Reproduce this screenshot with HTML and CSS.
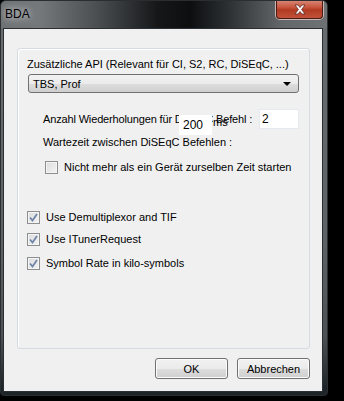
FILE: index.html
```html
<!DOCTYPE html>
<html lang="de">
<head>
  <meta charset="UTF-8" />
  <title>BDA</title>
  <link rel="stylesheet" href="styles.css">
</head>
<body>
  <div class="fenster">
    <div class="titel">
      <span class="titel-text">BDA</span>
      <div class="schliessen">
        <svg width="16" height="11" viewBox="0 0 16 11">
          <path d="M3 1 L6 1 L8 3.5 L10 1 L13 1 L9.6 5.5 L13 10 L10 10 L8 7.5 L6 10 L3 10 L6.4 5.5 Z" fill="#fff" stroke="#5a2a24" stroke-width="0.8"/>
        </svg>
      </div>
    </div>
    <div class="inhalt">
      <div class="gruppe">
        <div class="label">Zusätzliche API (Relevant für CI, S2, RC, DiSEqC, ...)</div>
        <div class="combo">
          <span>TBS, Prof</span>
          <svg width="8" height="4" viewBox="0 0 8 4"><path d="M0 0 L8 0 L4 4 Z" fill="#000"/></svg>
        </div>

        <div class="diseqc">
          <div class="zeile">
            <span class="zeile-text">Anzahl Wiederholungen für DiSEqC Befehl :</span>
            <div class="eingabe klein">2</div>
          </div>
          <div class="zeile2">Wartezeit zwischen DiSEqC Befehlen :</div>
          <label class="check">
            <span class="box"></span>
            Nicht mehr als ein Gerät zurselben Zeit starten
          </label>
          <div class="wartezeit">
            <div class="eingabe ms">200</div>
            <span>ms</span>
          </div>
        </div>

        <div class="optionen">
          <label class="check">
            <span class="box an"><svg width="9" height="9" viewBox="0 0 9 9"><path d="M1 4.5 L3.5 7.5 L8 1" fill="none" stroke="#6f86a8" stroke-width="1.8"/></svg></span>
            Use Demultiplexor and TIF
          </label>
          <label class="check">
            <span class="box an"><svg width="9" height="9" viewBox="0 0 9 9"><path d="M1 4.5 L3.5 7.5 L8 1" fill="none" stroke="#6f86a8" stroke-width="1.8"/></svg></span>
            Use ITunerRequest
          </label>
          <label class="check">
            <span class="box an"><svg width="9" height="9" viewBox="0 0 9 9"><path d="M1 4.5 L3.5 7.5 L8 1" fill="none" stroke="#6f86a8" stroke-width="1.8"/></svg></span>
            Symbol Rate in kilo-symbols
          </label>
        </div>
      </div>

      <div class="knoepfe">
        <button class="btn">OK</button>
        <button class="btn">Abbrechen</button>
      </div>
    </div>
  </div>
</body>
</html>
```

FILE: styles.css
```css
* { margin: 0; padding: 0; box-sizing: border-box; }
body {
  background-color: #000;
  font-family: "Liberation Sans", Arial, sans-serif;
  font-size: 11px;
  color: #000;
}

.fenster {
  width: 328px;
  height: 396px;
  border-radius: 6px 6px 4px 4px;
  background: linear-gradient(to bottom, #6a6d70 0, #5f6265 60%, #4d5155 85%, #1e2529 98%);
  border: 1px solid #2b2e31;
  display: flex;
  flex-direction: column;
  overflow: hidden;
}

.titel {
  height: 27px;
  display: flex;
  justify-content: space-between;
  align-items: flex-start;
  padding-left: 3px;
  padding-right: 4px;
  background: linear-gradient(to right, #6e7174 0, #75787b 12%, #4a4d50 30%, #151719 48%, #0c0e10 58%, #2e3134 70%, #64676a 86%, #6f7275 100%);
}

.titel-text {
  font-family: "Liberation Sans", Arial, sans-serif;
  font-size: 12px;
  color: #000;
  line-height: 26px;
  padding: 0 4px 0 1px;
  text-shadow: 0 0 6px #c8cacc, 0 0 10px #c8cacc;
}

.schliessen {
  width: 47px;
  height: 19px;
  margin-top: -1px;
  border: 1px solid #4a1a14;
  border-top: none;
  border-radius: 0 0 4px 4px;
  background: linear-gradient(to bottom, #d88a7c 0, #c8563f 40%, #b13b22 55%, #c2523b 100%);
  box-shadow: 0 0 0 1px #c9b8b6;
  display: flex;
  justify-content: center;
  align-items: center;
}

.inhalt {
  margin: 0 4px 3px 2px;
  flex: 1;
  background-color: #f0f0f0;
  border: 1px solid #2a2f33;
  padding: 19px 12px 0 13px;
  display: flex;
  flex-direction: column;
}

.gruppe {
  height: 301px;
  border: 1px solid #d5dbe0;
  border-radius: 3px;
  box-shadow: inset 1px 1px 0 #fff;
  padding: 9px 10px 0 9px;
  position: relative;
}

.label {
  line-height: 13px;
  white-space: nowrap;
}

.combo {
  margin-top: 3px;
  margin-left: 1px;
  height: 19px;
  border: 1px solid #707070;
  border-radius: 3px;
  background: linear-gradient(to bottom, #f2f2f2 0, #ebebeb 50%, #dddddd 51%, #cfcfcf 100%);
  display: flex;
  justify-content: space-between;
  align-items: center;
  padding: 0 7px 0 4px;
}

.diseqc {
  padding-left: 16px;
  margin-top: 16px;
  position: relative;
}

.zeile {
  display: flex;
  align-items: center;
  justify-content: space-between;
}

.zeile-text {
  white-space: nowrap;
  letter-spacing: -0.15px;
}

.eingabe {
  background-color: #fff;
  border: 1px solid #e3e9ef;
  height: 20px;
  line-height: 18px;
  padding-left: 2px;
  font-size: 12px;
  flex-shrink: 0;
}

.eingabe.klein {
  width: 40px;
  margin-left: 2px;
}

.zeile2 {
  margin-top: 7px;
  line-height: 13px;
  white-space: nowrap;
}

.check {
  display: flex;
  align-items: center;
  gap: 6px;
  line-height: 13px;
  white-space: nowrap;
}

.diseqc .check {
  margin-top: 12px;
  margin-left: 2px;
}

.box {
  width: 13px;
  height: 13px;
  flex-shrink: 0;
  border: 1px solid #8e8f8f;
  background: linear-gradient(135deg, #dcdcdc 0, #f4f4f4 100%);
  box-shadow: inset 0 0 0 1px #f4f4f4;
  display: flex;
  justify-content: center;
  align-items: center;
}

.wartezeit {
  position: absolute;
  left: 152px;
  top: 6px;
  display: flex;
  align-items: flex-end;
  gap: 1px;
}

.eingabe.ms {
  width: 33px;
  border-color: #fff;
  padding-left: 3px;
}

.wartezeit span {
  line-height: 13px;
  padding-bottom: 6px;
}

.optionen {
  margin-top: 37px;
  display: flex;
  flex-direction: column;
  gap: 9px;
}

.optionen .check:last-child {
  margin-top: 2px;
}

.knoepfe {
  display: flex;
  justify-content: flex-end;
  gap: 9px;
  margin-top: 9px;
}

.btn {
  width: 73px;
  height: 21px;
  font-family: "Liberation Sans", Arial, sans-serif;
  font-size: 11px;
  color: #000;
  border: 1px solid #707070;
  border-radius: 3px;
  background: linear-gradient(to bottom, #f2f2f2 0, #ebebeb 50%, #dddddd 51%, #cfcfcf 100%);
  box-shadow: inset 0 0 0 1px #fcfcfc;
}
```
